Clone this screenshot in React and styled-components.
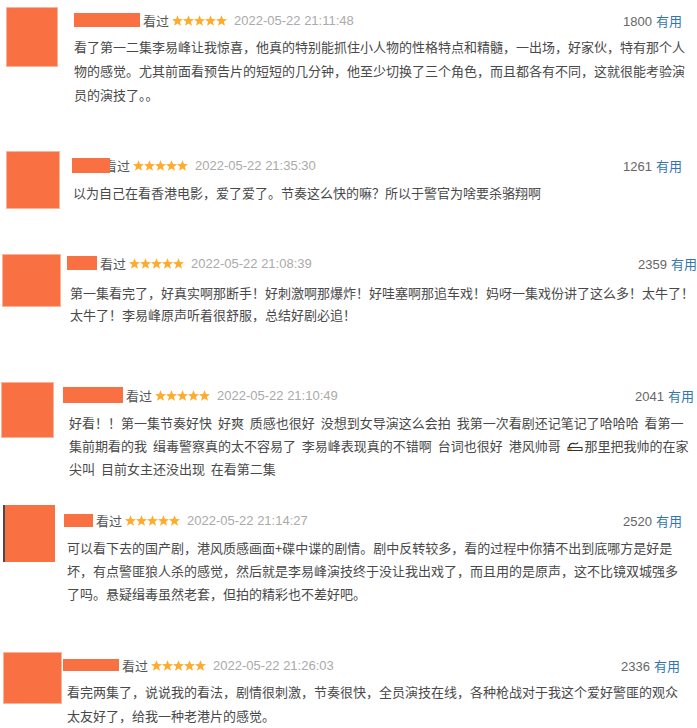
import styled, { createGlobalStyle } from "styled-components";

const GlobalStyle = createGlobalStyle`
  html, body {
    margin: 0;
    padding: 0;
    background: #fff;
    overflow: hidden;
  }
  body {
    font-family: "Liberation Sans", "Noto Sans CJK SC", sans-serif;
  }
`;

const Page = styled.div`
  width: 697px;
  height: 728px;
  padding-top: 8px;
  box-sizing: border-box;
  display: flex;
  flex-direction: column;
`;

const Card = styled.div`
  display: flex;
  align-items: flex-start;
  height: ${({ $h }) => $h}px;
  padding-right: ${({ $pr }) => $pr}px;
  flex-shrink: 0;
`;

const Avatar = styled.div`
  flex-shrink: 0;
  margin-left: ${({ $x }) => $x}px;
  margin-top: ${({ $top }) => $top}px;
  width: ${({ $w }) => $w}px;
  height: ${({ $h }) => $h}px;
  background: #f97043;
  box-shadow: ${({ $edge }) => ($edge ? "-2px 0 0 #4a4a4a" : "0 0 0 1px #fbb49a")};
`;

const Body = styled.div`
  flex: 1;
  min-width: 0;
  margin-left: ${({ $gap }) => $gap}px;
  margin-top: ${({ $top }) => $top}px;
`;

const Header = styled.div`
  display: flex;
  align-items: center;
  height: 20px;
  font-size: 13px;
  white-space: nowrap;
`;

const NameBar = styled.span`
  position: relative;
  z-index: 1;
  display: block;
  width: ${({ $w }) => $w}px;
  height: ${({ $h }) => $h}px;
  background: #f97043;
  margin-right: ${({ $overlap }) => ($overlap ? -6 : 3)}px;
`;

const Watched = styled.span`
  color: #555;
  font-family: "Noto Sans CJK SC", sans-serif;
`;

const Stars = styled.svg`
  margin: 0 7px 0 3px;
  flex-shrink: 0;
`;

const DateText = styled.span`
  color: #aaa;
`;

const Votes = styled.span`
  margin-left: auto;
  color: #666;
`;

const Useful = styled.span`
  color: #3377aa;
  font-family: "Noto Sans CJK SC", sans-serif;
  margin-left: 4px;
`;

const Text = styled.div`
  margin-top: ${({ $top }) => $top}px;
  padding-left: ${({ $indent }) => $indent}px;
  font-size: 13px;
  line-height: ${({ $lh }) => $lh}px;
  color: #494949;
  font-family: "Noto Sans CJK SC", sans-serif;
  word-spacing: 3px;
`;

const Line = styled.div`
  white-space: nowrap;
`;

// one five-point star, about 11px wide
const starPath = "M5.5 0 L7 3.7 L11 3.9 L7.9 6.4 L9 10.4 L5.5 8.2 L2 10.4 L3.1 6.4 L0 3.9 L4 3.7 Z";

const StarRow = () => (
  <Stars width="55" height="11" viewBox="0 0 55 11">
    {[0, 1, 2, 3, 4].map((i) => (
      <path key={i} d={starPath} transform={`translate(${i * 11} 0.3)`} fill="#ffac2d" />
    ))}
  </Stars>
);

const Smoke = styled.svg`
  vertical-align: -1px;
  margin: 0 2px 0 0;
`;

const Cigarette = () => (
  <Smoke width="16" height="11" viewBox="0 0 16 11">
    <path d="M2 6 Q3 1.5 7 2.5 Q10 3.5 11 1.5" fill="none" stroke="#333" strokeWidth="1.3" />
    <rect x="1" y="6.5" width="14" height="3" fill="#fff" stroke="#333" strokeWidth="1" />
    <rect x="1.5" y="7" width="3" height="2" fill="#e8a33c" />
  </Smoke>
);

const comments = [
  {
    h: 144, pr: 15,
    av: { x: 7, w: 50, h: 58, top: 0 },
    bar: { w: 66, h: 14 }, gap: 17, hdr: 2,
    indent: 0, textTop: 5, lh: 24,
    date: "2022-05-22 21:11:48", votes: 1800,
    lines: [
      "看了第一二集李易峰让我惊喜，他真的特别能抓住小人物的性格特点和精髓，一出场，好家伙，特有那个人",
      "物的感觉。尤其前面看预告片的短短的几分钟，他至少切换了三个角色，而且都各有不同，这就很能考验演",
      "员的演技了。。",
    ],
  },
  {
    h: 101, pr: 15,
    av: { x: 7, w: 52, h: 56, top: 0 },
    bar: { w: 38, h: 15, overlap: true }, gap: 13, hdr: 3,
    indent: 1, textTop: 6, lh: 24,
    date: "2022-05-22 21:35:30", votes: 1261,
    lines: ["以为自己在看香港电影，爱了爱了。节奏这么快的嘛？所以于警官为啥要杀骆翔啊"],
  },
  {
    h: 130, pr: 0,
    av: { x: 3, w: 57, h: 51, top: 2 },
    bar: { w: 30, h: 14 }, gap: 7, hdr: 0,
    indent: 3, textTop: 9, lh: 22,
    date: "2022-05-22 21:08:39", votes: 2359,
    lines: [
      "第一集看完了，好真实啊那断手！好刺激啊那爆炸！好哇塞啊那追车戏！妈呀一集戏份讲了这么多！太牛了！",
      "太牛了！李易峰原声听着很舒服，总结好剧必追！",
    ],
  },
  {
    h: 122, pr: 3,
    av: { x: 2, w: 51, h: 54, top: 0 },
    bar: { w: 60, h: 16 }, gap: 10, hdr: 2,
    indent: 6, textTop: 6, lh: 23,
    date: "2022-05-22 21:10:49", votes: 2041,
    lines: [
      "好看！！第一集节奏好快 好爽 质感也很好 没想到女导演这么会拍 我第一次看剧还记笔记了哈哈哈 看第一",
      ["集前期看的我 缉毒警察真的太不容易了 李易峰表现真的不错啊 台词也很好 港风帅哥", "那里把我帅的在家"],
      "尖叫 目前女主还没出现 在看第二集",
    ],
  },
  {
    h: 148, pr: 15,
    av: { x: 5, w: 50, h: 57, top: 0, edge: true },
    bar: { w: 29, h: 13 }, gap: 9, hdr: 5,
    indent: 3, textTop: 6, lh: 23,
    date: "2022-05-22 21:14:27", votes: 2520,
    lines: [
      "可以看下去的国产剧，港风质感画面+碟中谍的剧情。剧中反转较多，看的过程中你猜不出到底哪方是好是",
      "坏，有点警匪狼人杀的感觉，然后就是李易峰演技终于没让我出戏了，而且用的是原声，这不比镜双城强多",
      "了吗。悬疑缉毒虽然老套，但拍的精彩也不差好吧。",
    ],
  },
  {
    h: 75, pr: 17,
    av: { x: 4, w: 57, h: 50, top: 0 },
    bar: { w: 56, h: 12 }, gap: 2, hdr: 2,
    indent: 4, textTop: 5, lh: 24,
    date: "2022-05-22 21:26:03", votes: 2336,
    lines: [
      "看完两集了，说说我的看法，剧情很刺激，节奏很快，全员演技在线，各种枪战对于我这个爱好警匪的观众",
      "太友好了，给我一种老港片的感觉。",
    ],
  },
];

const Comment = ({ c }) => (
  <Card $h={c.h} $pr={c.pr}>
    <Avatar $x={c.av.x} $w={c.av.w} $h={c.av.h} $top={c.av.top} $edge={c.av.edge} />
    <Body $gap={c.gap} $top={c.hdr}>
      <Header>
        <NameBar $w={c.bar.w} $h={c.bar.h} $overlap={c.bar.overlap} />
        <Watched>看过</Watched>
        <StarRow />
        <DateText>{c.date}</DateText>
        <Votes>
          {c.votes}
          <Useful>有用</Useful>
        </Votes>
      </Header>
      <Text $top={c.textTop} $indent={c.indent} $lh={c.lh}>
        {c.lines.map((l, i) => (
          <Line key={i}>
            {Array.isArray(l) ? (
              <>
                {l[0]} <Cigarette />
                {l[1]}
              </>
            ) : (
              l
            )}
          </Line>
        ))}
      </Text>
    </Body>
  </Card>
);

export default function App() {
  return (
    <>
      <GlobalStyle />
      <Page>
        {comments.map((c, i) => (
          <Comment key={i} c={c} />
        ))}
      </Page>
    </>
  );
}
